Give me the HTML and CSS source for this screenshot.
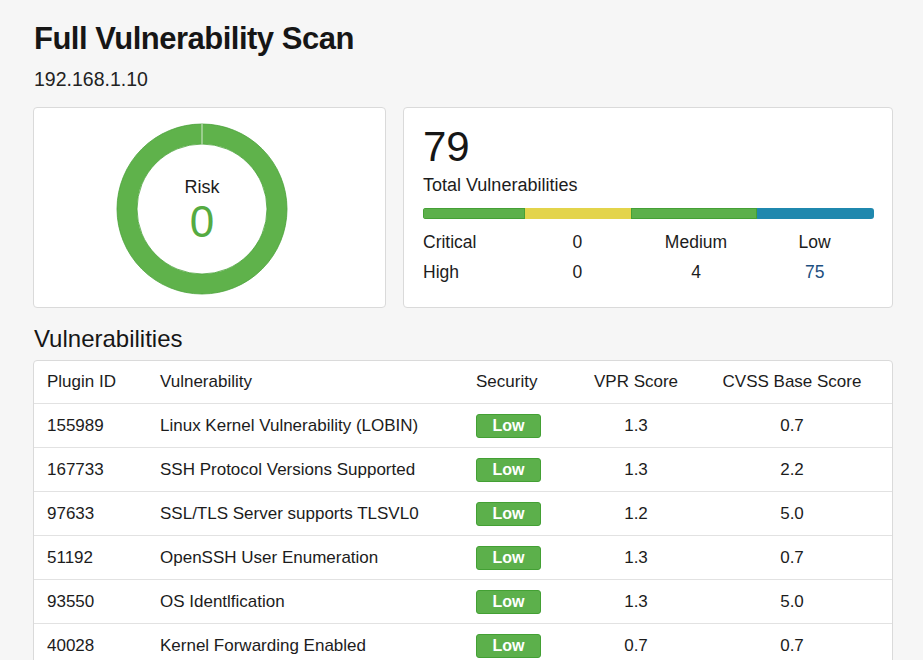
FILE: index.html
```html
<!DOCTYPE html>
<html lang="en">
<head>
<meta charset="utf-8">
<title>Full Vulnerability Scan</title>
<link rel="stylesheet" href="styles.css">
</head>
<body>
<main class="page">
  <h1 class="title">Full Vulnerability Scan</h1>
  <p class="host">192.168.1.10</p>

  <section class="cards">
    <div class="card risk-card">
      <div class="donut">
        <svg class="donut-svg" width="172" height="172" viewBox="0 0 172 172">
          <circle cx="86" cy="86" r="75" fill="none" stroke="#5fb24b" stroke-width="20"/>
          <circle cx="86" cy="86" r="85" fill="none" stroke="#4aa23a" stroke-width="0.8"/>
          <circle cx="86" cy="86" r="65" fill="none" stroke="#4aa23a" stroke-width="0.8"/>
          <line x1="86" y1="1" x2="86" y2="21" stroke="#d6e9d0" stroke-width="1"/>
        </svg>
        <div class="donut-label">
          <span class="risk-word">Risk</span>
          <span class="risk-value">0</span>
        </div>
      </div>
    </div>

    <div class="card total-card">
      <div class="total-num">79</div>
      <div class="total-label">Total Vulnerabilities</div>
      <div class="sev-bar">
        <span class="seg seg-green" style="width:22.6%"></span>
        <span class="seg seg-yellow" style="width:23.6%"></span>
        <span class="seg seg-green" style="width:27.9%"></span>
        <span class="seg seg-blue" style="width:25.9%"></span>
      </div>
      <div class="stats">
        <span class="stat-label">Critical</span>
        <span class="stat-c">0</span>
        <span class="stat-c">Medium</span>
        <span class="stat-c">Low</span>
        <span class="stat-label">High</span>
        <span class="stat-c">0</span>
        <span class="stat-c">4</span>
        <span class="stat-c stat-blue">75</span>
      </div>
    </div>
  </section>

  <h2 class="section-title">Vulnerabilities</h2>

  <div class="table">
    <div class="row head">
      <span class="cell">Plugin ID</span>
      <span class="cell">Vulnerability</span>
      <span class="cell">Security</span>
      <span class="cell num">VPR Score</span>
      <span class="cell num">CVSS Base Score</span>
    </div>
    <div class="row">
      <span class="cell">155989</span>
      <span class="cell">Linux Kernel Vulnerability (LOBIN)</span>
      <span class="cell"><span class="badge">Low</span></span>
      <span class="cell num">1.3</span>
      <span class="cell num">0.7</span>
    </div>
    <div class="row">
      <span class="cell">167733</span>
      <span class="cell">SSH Protocol Versions Supported</span>
      <span class="cell"><span class="badge">Low</span></span>
      <span class="cell num">1.3</span>
      <span class="cell num">2.2</span>
    </div>
    <div class="row">
      <span class="cell">97633</span>
      <span class="cell">SSL/TLS Server supports TLSVL0</span>
      <span class="cell"><span class="badge">Low</span></span>
      <span class="cell num">1.2</span>
      <span class="cell num">5.0</span>
    </div>
    <div class="row">
      <span class="cell">51192</span>
      <span class="cell">OpenSSH User Enumeration</span>
      <span class="cell"><span class="badge">Low</span></span>
      <span class="cell num">1.3</span>
      <span class="cell num">0.7</span>
    </div>
    <div class="row">
      <span class="cell">93550</span>
      <span class="cell">OS Identlfication</span>
      <span class="cell"><span class="badge">Low</span></span>
      <span class="cell num">1.3</span>
      <span class="cell num">5.0</span>
    </div>
    <div class="row">
      <span class="cell">40028</span>
      <span class="cell">Kernel Forwarding Enabled</span>
      <span class="cell"><span class="badge">Low</span></span>
      <span class="cell num">0.7</span>
      <span class="cell num">0.7</span>
    </div>
  </div>
</main>
</body>
</html>
```

FILE: styles.css
```css
* { box-sizing: border-box; }

html, body {
  margin: 0;
  background: #f6f6f6;
}

body {
  font-family: "Liberation Sans", Arial, sans-serif;
  color: #1c1c1c;
}

.page {
  padding: 21px 30px 0 33px;
}

.title {
  margin: 0;
  font-size: 31px;
  line-height: 36px;
  font-weight: 700;
  letter-spacing: -0.5px;
  color: #161616;
  padding-left: 1px;
}

.host {
  margin: 10px 0 0 1px;
  font-size: 19.5px;
  line-height: 24px;
  color: #222;
}

.cards {
  display: grid;
  grid-template-columns: 353px 490px;
  gap: 17px;
  margin-top: 16px;
}

.card {
  background: #fff;
  border: 1px solid #dadada;
  border-radius: 4px;
  height: 201px;
}

.risk-card {
  display: flex;
  align-items: center;
  padding-left: 82px;
}

.donut {
  position: relative;
  width: 172px;
  height: 172px;
  margin-top: 2px;
}

.donut-svg { display: block; }

.donut-label {
  position: absolute;
  inset: 0;
  display: flex;
  flex-direction: column;
  align-items: center;
  justify-content: center;
  padding-top: 3px;
}

.risk-word {
  font-size: 18px;
  line-height: 22px;
  color: #1c1c1c;
}

.risk-value {
  margin-top: 2px;
  font-size: 44px;
  line-height: 44px;
  color: #55ab42;
}

.total-card {
  padding: 15px 18px 0 19px;
}

.total-num {
  font-size: 42px;
  line-height: 48px;
  color: #161616;
}

.total-label {
  margin-top: 3px;
  font-size: 18px;
  line-height: 22px;
  color: #1c1c1c;
}

.sev-bar {
  display: flex;
  height: 11px;
  margin-top: 12px;
  border-radius: 3px;
  overflow: hidden;
}

.seg { display: block; height: 100%; }
.seg-green { background: #5cb04b; box-shadow: inset 0 0 0 1px #45a036; }
.seg-yellow { background: #e3d44b; }
.seg-blue { background: #1f88ae; }

.stats {
  display: grid;
  grid-template-columns: 95px repeat(3, 1fr);
  margin-top: 8px;
  font-size: 17.5px;
  line-height: 30px;
  color: #1c1c1c;
}

.stat-c { text-align: center; }
.stat-blue { color: #1d4f80; }

.section-title {
  margin: 17px 0 0 1px;
  font-size: 24px;
  line-height: 28px;
  font-weight: 400;
  color: #161616;
}

.table {
  margin-top: 7px;
  width: 860px;
  background: #fff;
  border: 1px solid #dadada;
  border-radius: 4px;
}

.row {
  display: grid;
  grid-template-columns: 113px 316px 117px 112px 1fr;
  align-items: center;
  height: 44px;
  border-top: 1px solid #e2e2e2;
  font-size: 17px;
  color: #1c1c1c;
}

.row.head {
  height: 42px;
  border-top: 0;
  padding-bottom: 1px;
}

.cell {
  padding-left: 13px;
  white-space: nowrap;
}

.cell.num {
  padding-left: 0;
  text-align: center;
}

.badge {
  display: inline-block;
  width: 65px;
  height: 24px;
  line-height: 22px;
  text-align: center;
  font-size: 16px;
  font-weight: 700;
  color: #fff;
  background: #5cb04b;
  border: 1px solid #43a034;
  border-radius: 3px;
  vertical-align: middle;
}
```
